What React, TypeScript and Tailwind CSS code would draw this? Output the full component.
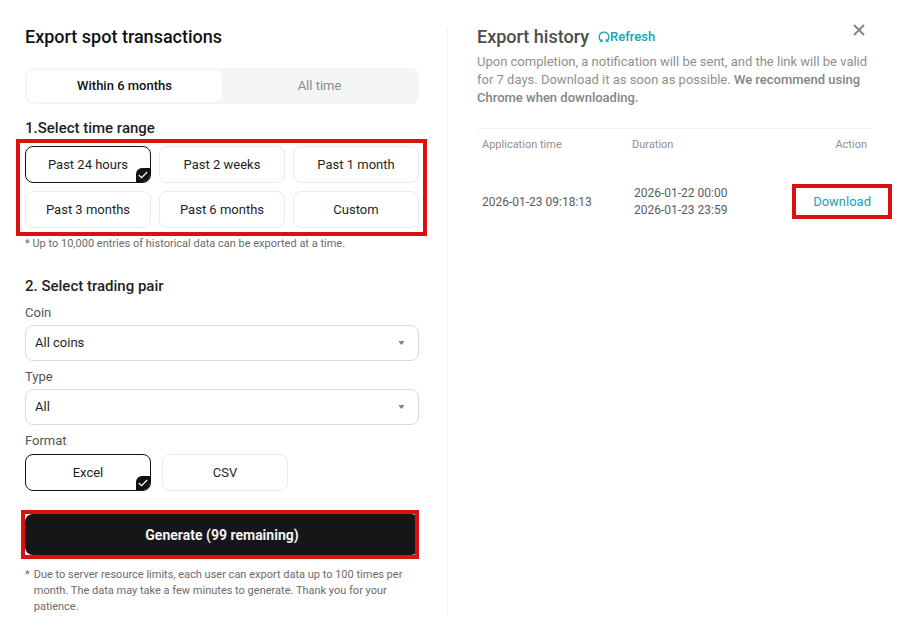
import React, { useState } from 'react';
import clsx from 'clsx';

const ranges = ['Past 24 hours', 'Past 2 weeks', 'Past 1 month', 'Past 3 months', 'Past 6 months', 'Custom'];
const formats = ['Excel', 'CSV'];

const history = [
  { applied: '2026-01-23 09:18:13', from: '2026-01-22 00:00', to: '2026-01-23 23:59' },
];

// Red frame that calls out the control below it
const Callout: React.FC<{ className: string }> = ({ className }) => (
  <span aria-hidden="true" className={clsx('absolute border-4 border-[#dd1010] pointer-events-none', className)} />
);

type OptionProps = { label: string; selected: boolean; onClick: () => void };

const OptionButton: React.FC<OptionProps> = ({ label, selected, onClick }) => (
  <button
    type="button"
    aria-pressed={selected}
    onClick={onClick}
    className={clsx(
      'relative h-[37px] rounded-lg border text-[13px] text-[#1f1f1f] overflow-hidden',
      selected ? 'border-[#121214]' : 'border-[#ebebeb]'
    )}
  >
    {label}
    {selected && (
      <span className="absolute right-0 bottom-0 w-3.5 h-3.5 rounded-tl-md bg-[#121214] flex items-center justify-center">
        <svg width="10" height="8" viewBox="0 0 10 8" fill="none" stroke="#fff" strokeWidth="1.2">
          <path d="M0.8 4 L3.6 6.7 L9.2 1" />
        </svg>
      </span>
    )}
  </button>
);

type SelectProps = { id: string; label: string; options: string[] };

const SelectField: React.FC<SelectProps> = ({ id, label, options }) => (
  <div className="mb-1.5">
    <label htmlFor={id} className="block text-[13px] leading-5 text-[#555]">{label}</label>
    <div className="relative">
      <select id={id} className="block w-full h-9 mt-0.5 pl-[9px] pr-8 rounded-lg border border-[#dcdcdc] bg-white text-[13px] text-[#1f1f1f] appearance-none">
        {options.map((o) => <option key={o}>{o}</option>)}
      </select>
      <svg className="absolute right-3.5 top-4 pointer-events-none" width="7" height="4" viewBox="0 0 7 4" fill="#858585">
        <path d="M0.5 0h6L4.2 3.6h-1.4z" />
      </svg>
    </div>
  </div>
);

export default function App() {
  const [tab, setTab] = useState('Within 6 months');
  const [range, setRange] = useState(ranges[0]);
  const [format, setFormat] = useState(formats[0]);

  return (
    <div className="relative flex bg-white pt-7 pb-3.5 pl-[25px] pr-[39px] font-['Roboto',sans-serif]">
      <section className="flex-1 min-w-0">
        <h2 className="text-lg leading-[18px] font-medium text-[#121214]">Export spot transactions</h2>

        <div className="flex mt-[22px] h-9 p-0.5 rounded-lg bg-[#f3f5f7]">
          {['Within 6 months', 'All time'].map((t) => (
            <button
              key={t}
              type="button"
              onClick={() => setTab(t)}
              className={clsx('flex-1 rounded-md text-[13px]', tab === t ? 'bg-white font-medium text-[#121214]' : 'text-[#8c8c8c]')}
            >
              {t}
            </button>
          ))}
        </div>

        <h3 className="mt-3.5 text-[15px] leading-5 font-medium text-[#1f1f1f]">1.Select time range</h3>
        <div className="relative grid grid-cols-3 gap-2 mt-2">
          {ranges.map((r) => (
            <OptionButton key={r} label={r} selected={range === r} onClick={() => setRange(r)} />
          ))}
          <Callout className="-left-[9px] -right-2 -top-[7px] -bottom-2" />
        </div>
        <p className="mt-2 text-[11px] leading-4 text-[#6b6b6b]">* Up to 10,000 entries of historical data can be exported at a time.</p>

        <h3 className="mt-6 mb-[7px] text-[15px] leading-5 font-medium text-[#1f1f1f]">2. Select trading pair</h3>
        <SelectField id="coin" label="Coin" options={['All coins', 'BTC', 'ETH', 'USDT']} />
        <SelectField id="type" label="Type" options={['All', 'Buy', 'Sell']} />
        <div className="text-[13px] leading-5 text-[#555]">Format</div>
        <div className="flex gap-[11px] mt-[3px]">
          {formats.map((f) => (
            <div key={f} className="w-[126px] grid">
              <OptionButton label={f} selected={format === f} onClick={() => setFormat(f)} />
            </div>
          ))}
        </div>

        <div className="relative mt-[23px]">
          <button type="button" className="block w-full h-[41px] rounded-lg bg-[#161618] text-sm font-bold text-[#f2f2f2]">
            Generate (99 remaining)
          </button>
          <Callout className="-left-1 right-0 -inset-y-1" />
        </div>
        <p className="flex gap-1 mt-3 text-[11px] leading-4 text-[#6b6b6b]">
          <span>*</span>
          <span>Due to server resource limits, each user can export data up to 100 times per month. The data may take a few minutes to generate. Thank you for your patience.</span>
        </p>
      </section>

      <div className="w-px ml-7 mr-[29px] bg-[#f2f2f2]" />

      <section className="flex-1 min-w-0">
        <div className="flex items-center h-[18px]">
          <h2 className="text-lg leading-[18px] font-medium text-[#4d4d4f]">Export history</h2>
          <button type="button" className="flex items-center ml-[9px] text-[13px] leading-[18px] font-medium text-[#17a3b5]">
            <svg width="12" height="12" viewBox="0 0 12 12" fill="none" stroke="currentColor" strokeWidth="1.3">
              <path d="M3.9 10.3 A4.8 4.8 0 0 1 6 1.2 A4.8 4.8 0 0 1 8.5 10.1" />
              <path d="M1.4 10.9 L4.3 10.5 L3.9 7.9 M10.8 10.6 L8.1 10.4 L8.3 7.8" strokeWidth="1" />
            </svg>
            Refresh
          </button>
        </div>
        <p className="mt-[7px] text-[13px] leading-[18px] text-[#8f8f8f]">
          Upon completion, a notification will be sent, and the link will be valid for 7 days. Download it as soon as possible. <span className="font-medium text-[#858585]">We recommend using Chrome when downloading.</span>
        </p>

        <table className="w-full mt-[21px] border-t border-[#f0f0f0] table-fixed">
          <thead>
            <tr className="h-8 text-[11px] text-[#8f8f8f]">
              <th className="w-[150px] pl-[5px] text-left font-normal">Application time</th>
              <th className="pl-[5px] text-left font-normal">Duration</th>
              <th className="pr-1 text-right font-normal">Action</th>
            </tr>
          </thead>
          <tbody>
            {history.map((h) => (
              <tr key={h.applied} className="h-[83px] text-xs leading-[17px] text-[#5c5c5c]">
                <td className="pl-[5px]">{h.applied}</td>
                <td className="pl-[7px]">{h.from}<br />{h.to}</td>
                <td className="text-right">
                  <a href="#download" className="relative inline-block text-[13px] text-[#17a3b5]">
                    Download
                    <Callout className="-inset-x-[21px] -inset-y-[9px]" />
                  </a>
                </td>
              </tr>
            ))}
          </tbody>
        </table>
      </section>

      <button type="button" aria-label="Close" className="absolute top-6 right-[45px] text-[#858585]">
        <svg width="12" height="12" viewBox="0 0 12 12" fill="none" stroke="currentColor" strokeWidth="2">
          <path d="M1 1 L11 11 M11 1 L1 11" />
        </svg>
      </button>
    </div>
  );
}
